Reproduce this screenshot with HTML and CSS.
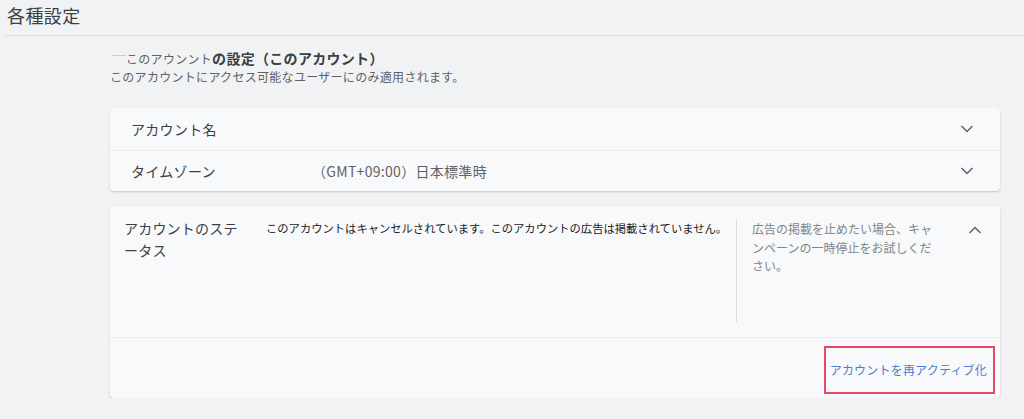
FILE: index.html
```html
<!DOCTYPE html>
<html lang="ja">
<head>
<meta charset="utf-8">
<link rel="stylesheet" href="styles.css">
</head>
<body>
<header class="page-head">
  <h1 class="page-title">各種設定</h1>
</header>
<main class="content">
  <div class="intro">
    <div class="intro-title"><span class="dash"></span><span class="intro-small">このアウンント</span><span class="intro-strong">の設定（このアカウント）</span></div>
    <div class="intro-sub">このアカウントにアクセス可能なユーザーにのみ適用されます。</div>
  </div>

  <div class="card-group">
    <div class="row">
      <div class="row-label">アカウント名</div>
      <div class="row-value"></div>
      <svg class="chev" viewBox="0 0 14 8" width="14" height="8"><path d="M1.5 1 L7 6.5 L12.5 1" fill="none" stroke="#5f6368" stroke-width="1.5"/></svg>
    </div>
    <div class="row">
      <div class="row-label">タイムゾーン</div>
      <div class="row-value">（GMT+09:00）日本標準時</div>
      <svg class="chev" viewBox="0 0 14 8" width="14" height="8"><path d="M1.5 1 L7 6.5 L12.5 1" fill="none" stroke="#5f6368" stroke-width="1.5"/></svg>
    </div>
  </div>

  <div class="status-card">
    <div class="status-body">
      <div class="status-label">アカウントのステータス</div>
      <div class="status-text">このアカウントはキャンセルされています。このアカウントの広告は掲載されていません。</div>
      <div class="status-side">広告の掲載を止めたい場合、キャンペーンの一時停止をお試しください。</div>
      <svg class="chev-up" viewBox="0 0 14 8" width="14" height="8"><path d="M1.5 7 L7 1.5 L12.5 7" fill="none" stroke="#5f6368" stroke-width="1.5"/></svg>
    </div>
    <div class="status-foot">
      <a class="reactivate" href="#">アカウントを再アクティブ化</a>
    </div>
  </div>
</main>
</body>
</html>
```
FILE: styles.css
```css
html, body {
  margin: 0;
  padding: 0;
  background: #f1f2f4;
  font-family: "Noto Sans CJK JP", "Noto Sans", sans-serif;
  color: #3c4043;
}
.page-head {
  margin-left: 5px;
  height: 36px;
  border-bottom: 1px solid #dadce0;
  box-sizing: border-box;
}
.page-title {
  margin: 0;
  padding: 2px 0 0 2px;
  font-size: 18px;
  letter-spacing: 0.4px;
  line-height: 26px;
  font-weight: 400;
  color: #3c4043;
}
.content {
  margin-left: 110px;
  width: 890px;
}
.intro {
  padding-top: 12px;
  height: 72px;
  box-sizing: border-box;
  letter-spacing: 0.3px;
}
.intro-title {
  display: flex;
  align-items: center;
  height: 20px;
}
.dash {
  display: inline-block;
  width: 14px;
  height: 1px;
  background: #c8cacd;
  margin-left: 2px;
  margin-top: -6px;
}
.intro-small {
  font-size: 12px;
  color: #5f6368;
}
.intro-strong {
  font-size: 14px;
  font-weight: 700;
  color: #3c4043;
}
.intro-sub {
  font-size: 12px;
  line-height: 18px;
  color: #5f6368;
}
.card-group {
  background: #f8f9fa;
  border-radius: 4px;
  box-shadow: 0 1px 2px rgba(60,64,67,0.25);
}
.row {
  display: flex;
  align-items: center;
  height: 42px;
  padding: 0 26px 0 21px;
  letter-spacing: 0.3px;
}
.row + .row {
  height: 41px;
  border-top: 1px solid #eceef0;
  box-sizing: border-box;
}
.row-label {
  width: 181px;
  font-size: 14px;
  color: #3c4043;
}
.row-value {
  flex: 1;
  font-size: 14px;
  color: #5f6368;
}
.chev {
  flex: none;
}
.status-card {
  margin-top: 15px;
  background: #f8f9fa;
  border-radius: 4px;
  box-shadow: 0 1px 2px rgba(60,64,67,0.25);
}
.status-body {
  display: flex;
  align-items: flex-start;
  height: 132px;
  padding: 14px 18px 15px 14px;
  box-sizing: border-box;
  border-bottom: 1px solid #eceef0;
}
.status-label {
  width: 126px;
  margin-right: 16px;
  margin-top: -3px;
  flex: none;
  font-size: 14px;
  line-height: 22px;
  color: #3c4043;
  letter-spacing: 0.2px;
}
.status-text {
  width: 470px;
  flex: none;
  font-size: 11.3px;
  line-height: 18px;
  margin-top: -1px;
  color: #202124;
}
.status-side {
  align-self: stretch;
  width: 197px;
  flex: none;
  border-left: 1px solid #dadce0;
  padding-left: 15px;
  box-sizing: border-box;
  font-size: 12px;
  line-height: 18.5px;
  color: #80868b;
}
.chev-up {
  margin-left: auto;
  margin-top: 6px;
  flex: none;
}
.status-foot {
  display: flex;
  justify-content: flex-end;
  height: 60px;
  padding: 8px 5px 4px 0;
  box-sizing: border-box;
}
.reactivate {
  display: flex;
  align-items: center;
  padding: 0 6px 2px 4px;
  border: 2px solid #e34b5e;
  font-size: 12px;
  letter-spacing: 0.2px;
  color: #4a7fd0;
  text-decoration: none;
  box-sizing: border-box;
  height: 48px;
}
```
